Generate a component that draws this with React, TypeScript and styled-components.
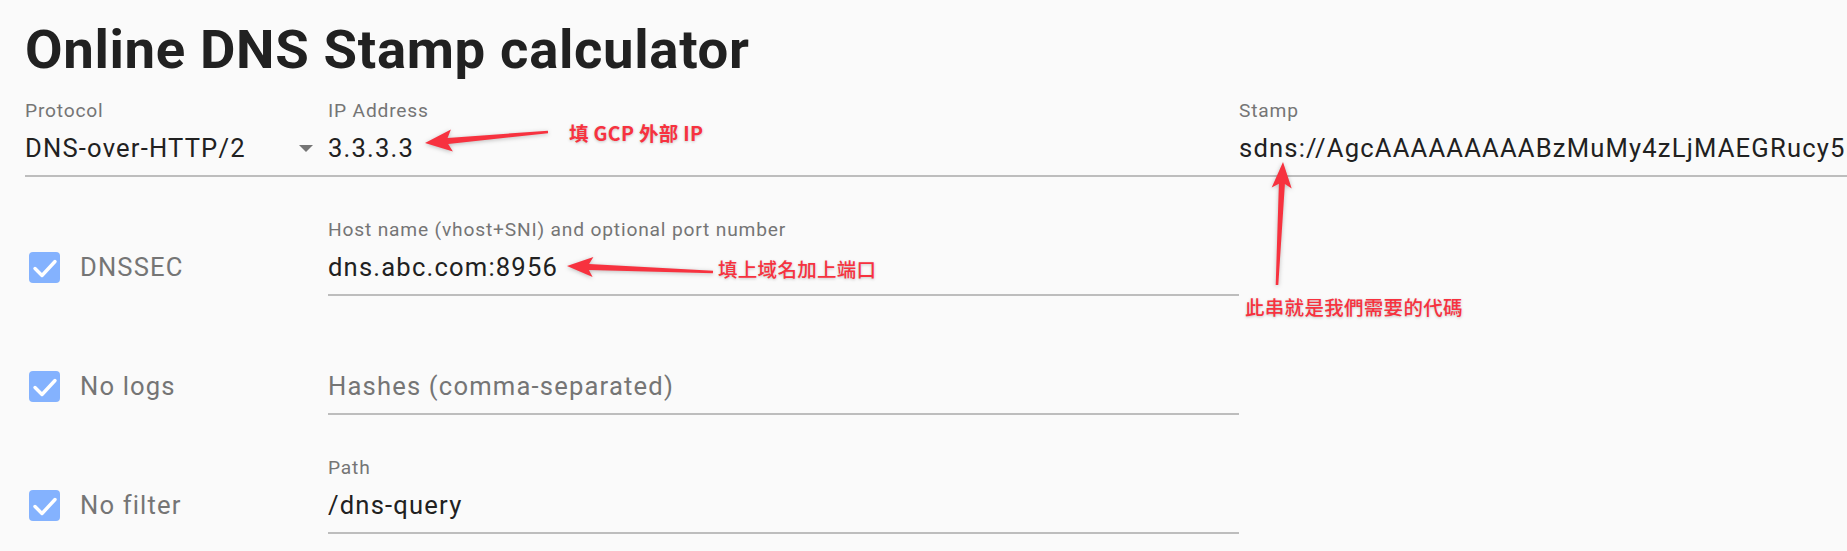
import React from "react";
import styled, { createGlobalStyle } from "styled-components";

const GlobalStyle = createGlobalStyle`
  html, body {
    margin: 0;
    padding: 0;
    background: #fafafa;
    overflow: hidden;
  }
  body {
    font-family: Roboto, "Noto Sans", Arial, sans-serif;
    color: #212121;
  }
`;

const Page = styled.div`
  position: relative;
  width: 1847px;
  height: 551px;
  box-sizing: border-box;
  padding-left: 25px;
  overflow: hidden;
  background: #fafafa;
`;

const Title = styled.h1`
  margin: 17px 0 18px 0;
  font-family: Roboto, Arial, sans-serif;
  font-size: 54.5px;
  line-height: 64px;
  font-weight: 700;
  color: #212121;
  letter-spacing: 0.65px;
`;

const Form = styled.div`
  display: grid;
  grid-template-columns: 303px 911px 1fr;
  row-gap: 41px;
  align-items: start;
`;

const Field = styled.div`
  display: flex;
  flex-direction: column;
  min-width: 0;
`;

const Label = styled.div`
  font-size: 19.2px;
  line-height: 24px;
  height: 24px;
  color: #757575;
  margin-bottom: 9px;
  white-space: nowrap;
  letter-spacing: 0.82px;
`;

const InputLine = styled.div`
  display: flex;
  align-items: center;
  height: 32px;
  padding-bottom: 11px;
  border-bottom: 2px solid #bdbdbd;
  min-width: 0;
`;

const Value = styled.div<{ $muted?: boolean }>`
  flex: 1;
  min-width: 0;
  font-size: 25.6px;
  line-height: 32px;
  letter-spacing: 1.18px;
  color: ${(p) => (p.$muted ? "#757575" : "#212121")};
  white-space: nowrap;
  overflow: hidden;
`;

const Caret = styled.svg`
  width: 14px;
  height: 7px;
  margin-right: 15px;
  flex: none;
`;

const CheckItem = styled.div`
  display: flex;
  align-items: center;
  height: 32px;
  margin-top: 33px;
  padding-left: 4px;
  gap: 20px;
`;

const Box = styled.span`
  width: 31px;
  height: 31px;
  border-radius: 4px;
  background: #84b2fe;
  display: inline-flex;
  align-items: center;
  justify-content: center;
  flex: none;
`;

const CheckText = styled.span`
  font-size: 25.6px;
  line-height: 32px;
  letter-spacing: 1.15px;
  color: #757575;
`;

const Overlay = styled.svg`
  position: absolute;
  left: 0;
  top: 0;
  width: 1847px;
  height: 551px;
  pointer-events: none;
  filter: drop-shadow(0 1px 2px rgba(0, 0, 0, 0.25));
`;

const Note = styled.span<{ $bold?: boolean }>`
  position: absolute;
  font-family: "Noto Sans CJK TC", "Noto Sans CJK SC", "Noto Sans", sans-serif;
  font-size: 19.5px;
  line-height: 20px;
  font-weight: ${(p) => (p.$bold ? 700 : 500)};
  color: #f7323f;
  white-space: nowrap;
  letter-spacing: 0.3px;
  text-shadow: 0 1px 3px rgba(0, 0, 0, 0.22);
`;

type Pt = [number, number];

function arrowPoints(tip: Pt, tail: Pt, headLen: number, headHalf: number, shaftHalf: number, tailHalf: number): string {
  const dx = tail[0] - tip[0];
  const dy = tail[1] - tip[1];
  const len = Math.hypot(dx, dy);
  const ux = dx / len;
  const uy = dy / len;
  const nx = -uy;
  const ny = ux;
  const bx = tip[0] + ux * headLen;
  const by = tip[1] + uy * headLen;
  const nbx = tip[0] + ux * (headLen - 4);
  const nby = tip[1] + uy * (headLen - 4);
  const pts: Pt[] = [
    tip,
    [bx + nx * headHalf, by + ny * headHalf],
    [nbx + nx * shaftHalf, nby + ny * shaftHalf],
    [tail[0] + nx * tailHalf, tail[1] + ny * tailHalf],
    [tail[0] - nx * tailHalf, tail[1] - ny * tailHalf],
    [nbx - nx * shaftHalf, nby - ny * shaftHalf],
    [bx - nx * headHalf, by - ny * headHalf],
  ];
  return pts.map((p) => `${p[0].toFixed(1)},${p[1].toFixed(1)}`).join(" ");
}

const Check = () => (
  <Box>
    <svg width="31" height="31" viewBox="0 0 31 31">
      <polyline
        points="6,16.5 13,23.5 26,9.5"
        fill="none"
        stroke="#ffffff"
        strokeWidth="3.4"
        strokeLinecap="round"
        strokeLinejoin="round"
      />
    </svg>
  </Box>
);

const TextField = ({ label, value, placeholder }: { label?: string; value?: string; placeholder?: string }) => (
  <Field>
    <Label>{label ?? ""}</Label>
    <InputLine>
      {value ? <Value>{value}</Value> : <Value $muted>{placeholder}</Value>}
    </InputLine>
  </Field>
);

const stamp = "sdns://AgcAAAAAAAAABzMuMy4zLjMAEGRucy5hYmMuY29tOjg5NTYKL2Rucy1xdWVyeQ";

export default function App() {
  return (
    <>
      <GlobalStyle />
      <Page>
        <Title>Online DNS Stamp calculator</Title>
        <Form>
          <Field>
            <Label>Protocol</Label>
            <InputLine>
              <Value>DNS-over-HTTP/2</Value>
              <Caret viewBox="0 0 14 7">
                <polygon points="0,0 14,0 7,7" fill="#757575" />
              </Caret>
            </InputLine>
          </Field>
          <TextField label="IP Address" value="3.3.3.3" />
          <TextField label="Stamp" value={stamp} />

          <CheckItem>
            <Check />
            <CheckText>DNSSEC</CheckText>
          </CheckItem>
          <TextField label="Host name (vhost+SNI) and optional port number" value="dns.abc.com:8956" />
          <div />

          <CheckItem>
            <Check />
            <CheckText>No logs</CheckText>
          </CheckItem>
          <TextField placeholder="Hashes (comma-separated)" />
          <div />

          <CheckItem>
            <Check />
            <CheckText>No filter</CheckText>
          </CheckItem>
          <TextField label="Path" value="/dns-query" />
          <div />
        </Form>

        <Overlay viewBox="0 0 1847 551">
          <polygon points={arrowPoints([425, 143], [548, 132], 27, 11, 3, 1.3)} fill="#f7323f" />
          <polygon points={arrowPoints([567, 266], [713, 272], 26, 10, 3, 1.3)} fill="#f7323f" />
          <polygon points={arrowPoints([1283, 162], [1277, 285], 26, 10, 3, 1.3)} fill="#f7323f" />
        </Overlay>
        <Note $bold style={{ left: 569, top: 123 }}>填 GCP 外部 IP</Note>
        <Note style={{ left: 718, top: 259 }}>填上域名加上端口</Note>
        <Note style={{ left: 1245, top: 297 }}>此串就是我們需要的代碼</Note>
      </Page>
    </>
  );
}
